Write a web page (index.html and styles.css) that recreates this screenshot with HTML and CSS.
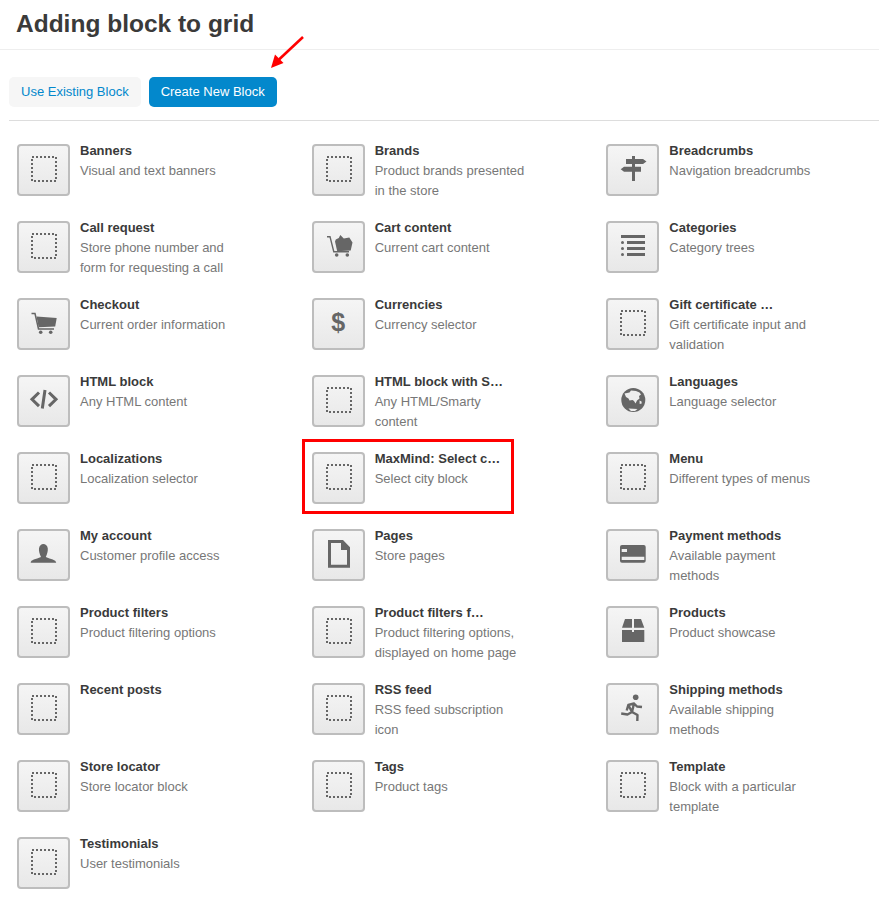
FILE: index.html
```html
<!DOCTYPE html>
<html lang="en">
<head>
<meta charset="utf-8">
<title>Adding block to grid</title>
<link rel="stylesheet" href="styles.css">
</head>
<body>
<svg class="defs" width="0" height="0" aria-hidden="true">
  <symbol id="i-blank" viewBox="0 0 49 48"><rect x="13" y="11" width="24" height="24" fill="none" stroke="#666" stroke-width="2" stroke-dasharray="2 2"/></symbol>
  <symbol id="i-sign" viewBox="0 0 49 48"><path fill="#666" d="M24 10h3v25h-3zM18 13h17l3.500 2.500-3.500 2.500H18zM12.700 23.200l3.300-2.500h17v5H16z"/></symbol>
  <symbol id="i-list" viewBox="0 0 49 48"><path fill="#666" d="M13 12h24v3H13zM19 18h18v3H19zM19 24h18v3H19zM19 30h18v3H19z"/><circle cx="14.500" cy="19.500" r="1.500" fill="#666"/><circle cx="14.500" cy="25.500" r="1.500" fill="#666"/><circle cx="14.500" cy="31.500" r="1.500" fill="#666"/></symbol>
  <symbol id="i-cart" viewBox="0 0 49 48"><path fill="none" stroke="#666" stroke-width="1.500" d="M12.500 13.500h3.500l3.500 15.500h15.500"/><path fill="#666" d="M17.500 16.500l20.200 1.500-1.500 8.500-16.500 .8z"/><circle cx="21.700" cy="32.300" r="1.800" fill="#666"/><circle cx="31.700" cy="32.300" r="1.800" fill="#666"/></symbol>
  <symbol id="i-cartfull" viewBox="0 0 49 48"><path fill="none" stroke="#666" stroke-width="1.400" d="M13 13.700h3l3.800 15h15.200"/><path fill="#666" d="M21 18.500l.8-2 3-1.500 1.500-3 3.500 3.500 5.500-1 3.200 5-1.800 8-13.500 .8z"/><circle cx="22.700" cy="32" r="1.800" fill="#666"/><circle cx="33.300" cy="32" r="1.800" fill="#666"/></symbol>
  <symbol id="i-code" viewBox="0 0 49 48"><path fill="none" stroke="#666" stroke-width="3" d="M20 15.500l-7 6.800 7 6.800M30 15.500l7 6.800-7 6.800M26 13l-2.700 18.500"/></symbol>
  <symbol id="i-globe" viewBox="0 0 49 48"><circle cx="25.300" cy="23" r="12" fill="#666"/><path fill="#eee" d="M16.500 16.500l5-1 1.500-2 5 .5 3.500 1.500 1.500 2-2 1.500.5 2.500-2.500 2-1.500 3-1.500-2.500-1.500-1-3 .5-1-2-2.500-1.500zM31.500 23.500l2 1 .2 2-2 .5zM20.500 31.500l9 .5-2.500 2h-4z"/></symbol>
  <symbol id="i-person" viewBox="0 0 49 48"><path fill="#666" d="M11.700 31.700c0-3 5-3.500 10.300-5.700-1.500-3-2.300-6-2-8.500.4-3 2.300-4.500 4.300-4.500 2.300 0 4.200 1.500 4.500 4.500 .2 2.500-.5 5.500-2 8.500 5 2.200 10.200 2.700 10.400 5.700z"/></symbol>
  <symbol id="i-page" viewBox="0 0 49 48"><path fill="#666" fill-rule="evenodd" d="M14 9h15l7 7.300v20.400H14zM17 12v21.700h16V19h-6v-7z"/></symbol>
  <symbol id="i-card" viewBox="0 0 49 48"><rect x="12" y="14" width="25.700" height="17.700" rx="2" fill="#666"/><path fill="#eee" d="M13.700 25.700h22.600V29H13.700zM13.700 18H19v3h-5.300z"/></symbol>
  <symbol id="i-box" viewBox="0 0 49 48"><path fill="#666" d="M17 11h7v8.700H14zM26 11h7l3.300 8.700H26zM14 22h10v2h2v-2h10.300v12H14z"/></symbol>
  <symbol id="i-run" viewBox="0 0 49 48"><circle cx="27.700" cy="12.300" r="2.800" fill="#666"/><path fill="none" stroke="#666" stroke-width="2.400" stroke-linejoin="round" d="M18.700 25.500l1.600-5.500 5.700-1.500-2 8.500-4.500 2.500-6.300-1M20.300 20l3.700 7M26 18.500l3 3 5 .5M24 27l5.500 3-.2 6"/></symbol>
</svg>

<header class="page-head"><h1 class="title">Adding block to grid</h1></header>

<nav class="tabs">
  <a class="tab">Use Existing Block</a>
  <a class="tab tab-active">Create New Block</a>
</nav>

<main class="grid">
  <div class="item"><span class="tile"><svg><use href="#i-blank"/></svg></span><div class="info"><div class="name">Banners</div><div class="desc">Visual and text banners</div></div></div>
  <div class="item"><span class="tile"><svg><use href="#i-blank"/></svg></span><div class="info"><div class="name">Brands</div><div class="desc">Product brands presented in the store</div></div></div>
  <div class="item"><span class="tile"><svg><use href="#i-sign"/></svg></span><div class="info"><div class="name">Breadcrumbs</div><div class="desc">Navigation breadcrumbs</div></div></div>

  <div class="item"><span class="tile"><svg><use href="#i-blank"/></svg></span><div class="info"><div class="name">Call request</div><div class="desc">Store phone number and form for requesting a call</div></div></div>
  <div class="item"><span class="tile"><svg><use href="#i-cartfull"/></svg></span><div class="info"><div class="name">Cart content</div><div class="desc">Current cart content</div></div></div>
  <div class="item"><span class="tile"><svg><use href="#i-list"/></svg></span><div class="info"><div class="name">Categories</div><div class="desc">Category trees</div></div></div>

  <div class="item"><span class="tile"><svg><use href="#i-cart"/></svg></span><div class="info"><div class="name">Checkout</div><div class="desc">Current order information</div></div></div>
  <div class="item"><span class="tile tile-glyph">$</span><div class="info"><div class="name">Currencies</div><div class="desc">Currency selector</div></div></div>
  <div class="item"><span class="tile"><svg><use href="#i-blank"/></svg></span><div class="info"><div class="name">Gift certificate …</div><div class="desc">Gift certificate input and validation</div></div></div>

  <div class="item"><span class="tile"><svg><use href="#i-code"/></svg></span><div class="info"><div class="name">HTML block</div><div class="desc">Any HTML content</div></div></div>
  <div class="item"><span class="tile"><svg><use href="#i-blank"/></svg></span><div class="info"><div class="name">HTML block with S…</div><div class="desc">Any HTML/Smarty content</div></div></div>
  <div class="item"><span class="tile"><svg><use href="#i-globe"/></svg></span><div class="info"><div class="name">Languages</div><div class="desc">Language selector</div></div></div>

  <div class="item"><span class="tile"><svg><use href="#i-blank"/></svg></span><div class="info"><div class="name">Localizations</div><div class="desc">Localization selector</div></div></div>
  <div class="item"><span class="tile"><svg><use href="#i-blank"/></svg></span><div class="info"><div class="name">MaxMind: Select c…</div><div class="desc">Select city block</div></div></div>
  <div class="item"><span class="tile"><svg><use href="#i-blank"/></svg></span><div class="info"><div class="name">Menu</div><div class="desc">Different types of menus</div></div></div>

  <div class="item"><span class="tile"><svg><use href="#i-person"/></svg></span><div class="info"><div class="name">My account</div><div class="desc">Customer profile access</div></div></div>
  <div class="item"><span class="tile"><svg><use href="#i-page"/></svg></span><div class="info"><div class="name">Pages</div><div class="desc">Store pages</div></div></div>
  <div class="item"><span class="tile"><svg><use href="#i-card"/></svg></span><div class="info"><div class="name">Payment methods</div><div class="desc">Available payment methods</div></div></div>

  <div class="item"><span class="tile"><svg><use href="#i-blank"/></svg></span><div class="info"><div class="name">Product filters</div><div class="desc">Product filtering options</div></div></div>
  <div class="item"><span class="tile"><svg><use href="#i-blank"/></svg></span><div class="info"><div class="name">Product filters f…</div><div class="desc">Product filtering options, displayed on home page</div></div></div>
  <div class="item"><span class="tile"><svg><use href="#i-box"/></svg></span><div class="info"><div class="name">Products</div><div class="desc">Product showcase</div></div></div>

  <div class="item"><span class="tile"><svg><use href="#i-blank"/></svg></span><div class="info"><div class="name">Recent posts</div></div></div>
  <div class="item"><span class="tile"><svg><use href="#i-blank"/></svg></span><div class="info"><div class="name">RSS feed</div><div class="desc">RSS feed subscription icon</div></div></div>
  <div class="item"><span class="tile"><svg><use href="#i-run"/></svg></span><div class="info"><div class="name">Shipping methods</div><div class="desc">Available shipping methods</div></div></div>

  <div class="item"><span class="tile"><svg><use href="#i-blank"/></svg></span><div class="info"><div class="name">Store locator</div><div class="desc">Store locator block</div></div></div>
  <div class="item"><span class="tile"><svg><use href="#i-blank"/></svg></span><div class="info"><div class="name">Tags</div><div class="desc">Product tags</div></div></div>
  <div class="item"><span class="tile"><svg><use href="#i-blank"/></svg></span><div class="info"><div class="name">Template</div><div class="desc">Block with a particular template</div></div></div>

  <div class="item"><span class="tile"><svg><use href="#i-blank"/></svg></span><div class="info"><div class="name">Testimonials</div><div class="desc">User testimonials</div></div></div>
</main>

<div class="mark-box"></div>
<svg class="mark-arrow" viewBox="0 0 36 36" aria-hidden="true"><path d="M34 2L10 24.500" fill="none" stroke="#f00" stroke-width="2.600"/><path d="M2 33L6 19.500l8.500 8.500z" fill="#f00"/></svg>
</body>
</html>
```
FILE: styles.css
```css
html, body {
  margin: 0;
  padding: 0;
  background: #fff;
}
body {
  position: relative;
  height: 899px;
  overflow: hidden;
  font-family: "Liberation Sans", Arial, sans-serif;
  font-size: 13px;
  line-height: 20px;
  color: #333;
}
.defs {
  position: absolute;
}
.page-head {
  height: 49px;
  padding-left: 16px;
  border-bottom: 1px solid #eee;
}
.title {
  margin: 0;
  font-size: 24.5px;
  font-weight: bold;
  line-height: 47px;
  color: #3a3a3a;
}
.tabs {
  display: flex;
  gap: 8px;
  margin: 27px 0 0 9px;
  padding-bottom: 13px;
  border-bottom: 1px solid #ddd;
}
.tab {
  height: 30px;
  padding: 0 12px;
  border-radius: 5px;
  line-height: 29px;
  background: #f6f6f6;
  color: #0388cc;
}
.tab-active {
  background: #0388cc;
  color: #fff;
}
.grid {
  display: grid;
  grid-template-columns: repeat(3, 294.67px);
  grid-auto-rows: 77px;
  padding: 23px 0 0 17px;
}
.item {
  display: flex;
  gap: 10px;
}
.tile {
  flex: none;
  width: 49px;
  height: 48px;
  border: 2px solid #bdbdbd;
  border-radius: 4px;
  background: linear-gradient(#f5f5f5, #e8e8e8);
}
.tile svg {
  display: block;
  width: 49px;
  height: 48px;
}
.tile-glyph {
  font-size: 25px;
  font-weight: bold;
  line-height: 45px;
  text-align: center;
  color: #666;
}
.info {
  width: 150px;
  margin-top: -3px;
}
.name {
  font-weight: bold;
  color: #3a3a3a;
}
.desc {
  color: #777;
}
.mark-box {
  position: absolute;
  left: 302px;
  top: 439px;
  width: 206px;
  height: 69px;
  border: 3px solid #f00;
}
.mark-arrow {
  position: absolute;
  left: 269px;
  top: 35px;
  width: 36px;
  height: 36px;
}
```
